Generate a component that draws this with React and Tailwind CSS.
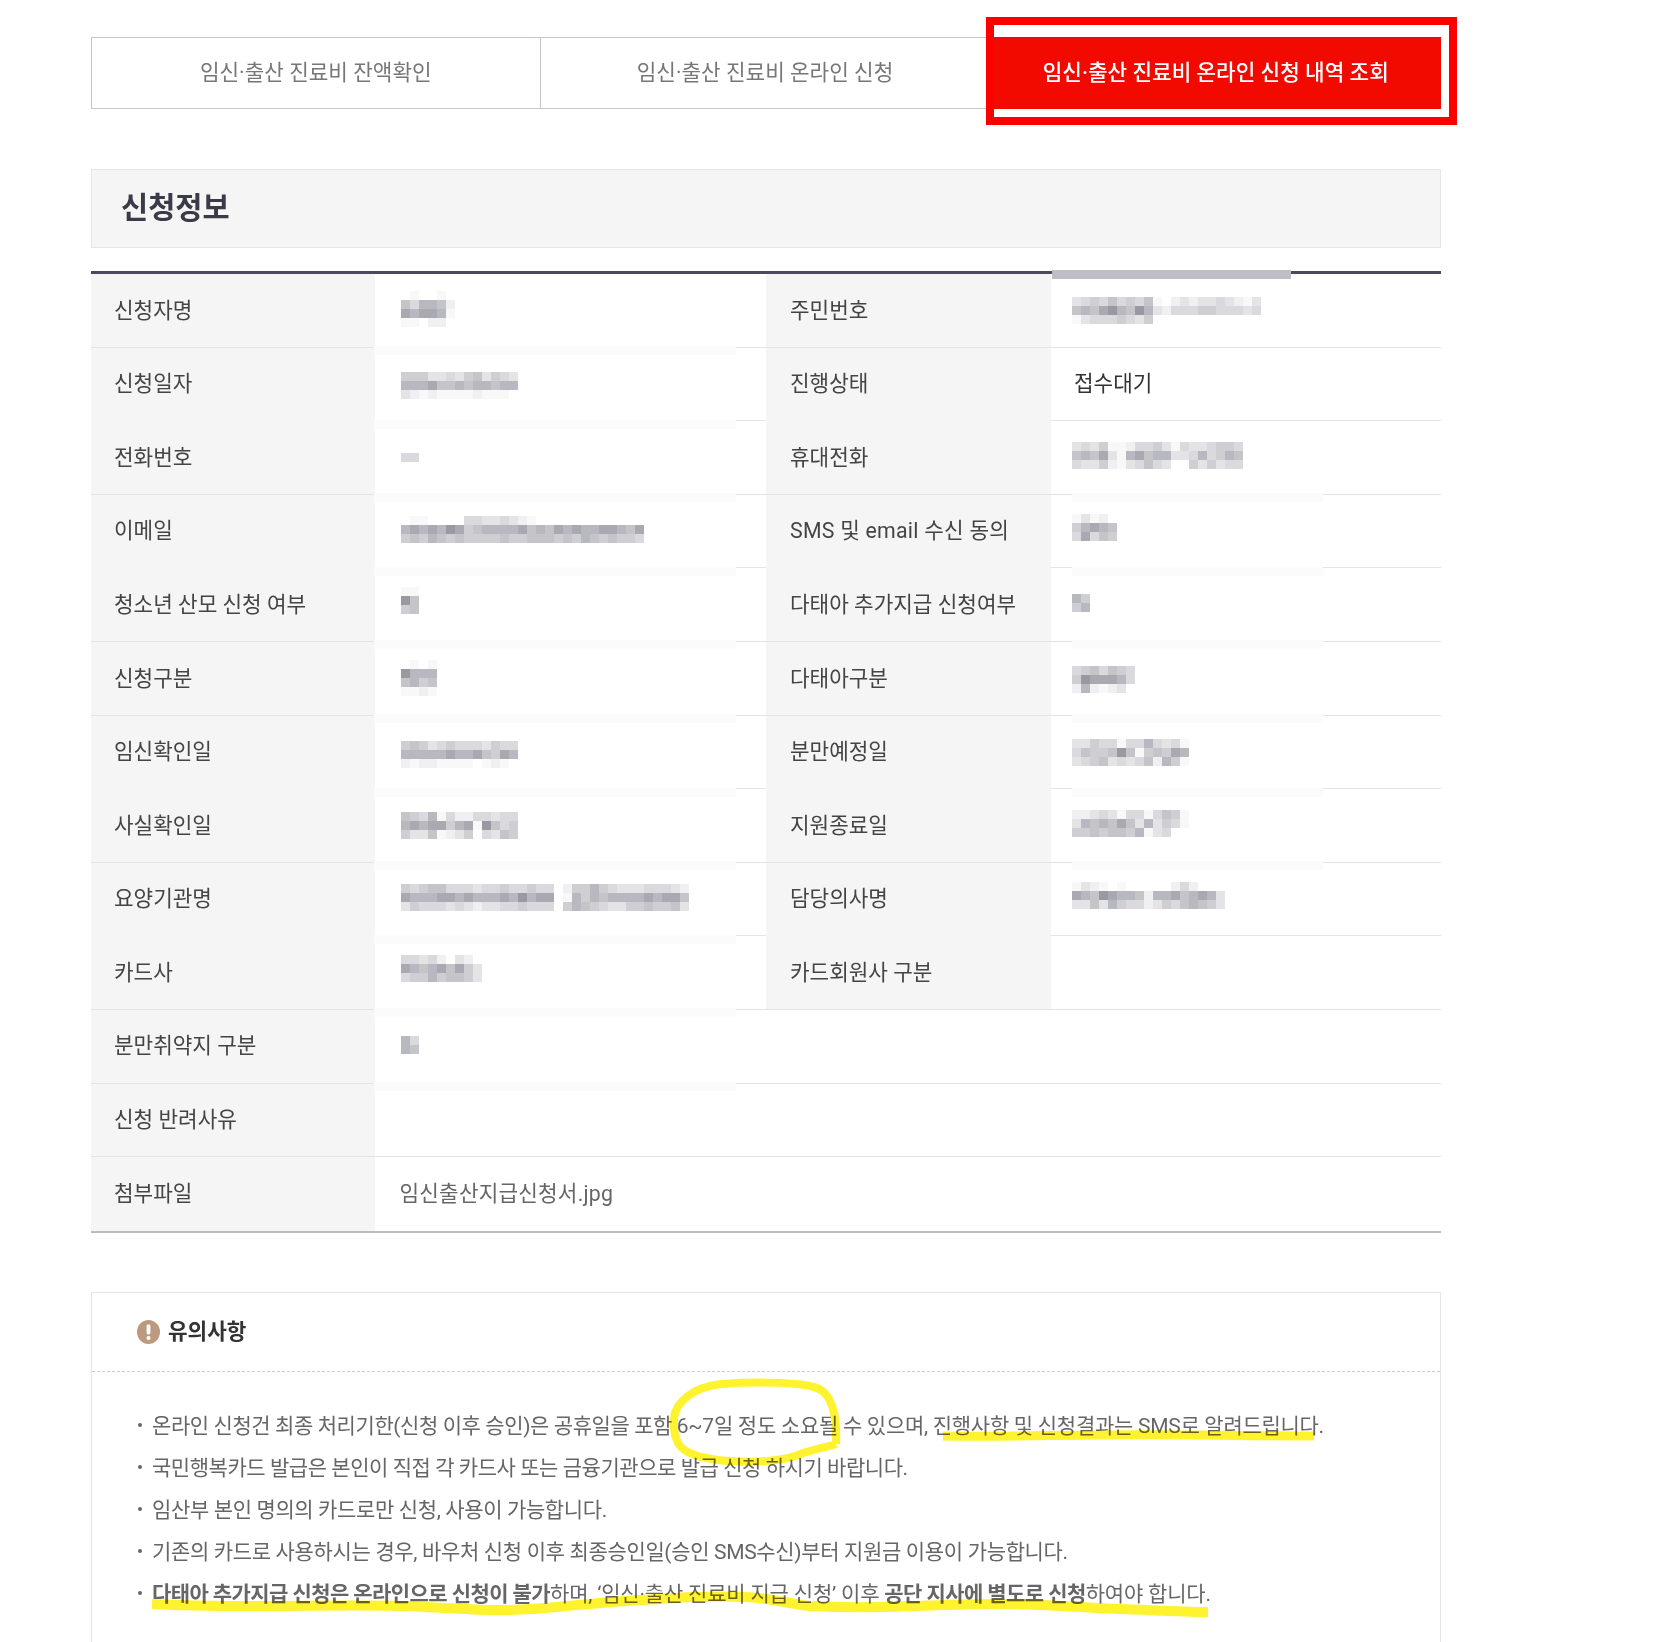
const SHADES = ["", "#f8f8f9", "#f0f0f2", "#e4e4e7", "#dadade", "#cfced3", "#c4c4c9", "#b8b8c0", "#aaa9b1", "#9a99a2"];

function Mosaic({ top, rows, cell = 9 }) {
  const width = Math.max(...rows.map((r) => r.length)) * cell;
  return (
    <svg width={width} height="73" className="ml-[1px] block overflow-visible" aria-hidden="true">
      {rows.map((row, ry) =>
        [...row].map((c, cx) =>
          c === "0" ? null : (
            <rect
              key={`${ry}-${cx}`}
              x={cx * cell}
              y={top + ry * cell}
              width={cell}
              height={cell}
              fill={SHADES[Number(c)]}
            />
          )
        )
      )}
    </svg>
  );
}

const rowsData = [
  { l: "신청자명", lv: { top: 17, rows: ["010010", "647762", "878871", "110220"] }, r: "주민번호", rv: { top: 23, rows: ["345464546102323343213", "676897697324445544434", "134445435000000000000"] } },
  { l: "신청일자", lv: { top: 24, rows: ["5553343563543", "7778667677677", "3212111121110"] }, r: "진행상태", rt: "접수대기" },
  { l: "전화번호", lv: { top: 32, rows: ["44"] }, r: "휴대전화", rv: { top: 21, rows: ["3435112445314334554", "6768317867733474576", "4335213464300535344"] } },
  { l: "이메일", lv: { top: 21, rows: ["011000044334321000000000000", "787879856777786768787788768", "565765655556556665657656554"] }, r: "SMS 및 email 수신 동의", rclass: "tracking-[0.25px]", rv: { top: 19, rows: ["13120", "57876", "48465"] } },
  { l: "청소년 산모 신청 여부", lv: { top: 19, rows: ["11", "96", "56"] }, r: "다태아 추가지급 신청여부", rv: { top: 26, rows: ["75", "57"] } },
  { l: "신청구분", lv: { top: 18, rows: ["0101", "9777", "6756", "1121"] }, r: "다태아구분", rv: { top: 24, rows: ["4564654", "5988874", "2721230"] } },
  { l: "임신확인일", lv: { top: 25, rows: ["5653454443544", "7777787786587", "2122111101210"] }, r: "분만예정일", rv: { top: 23, rows: ["3354414474341", "4655696156587", "3456343462751"] } },
  { l: "사실확인일", lv: { top: 23, rows: ["6547142244344", "7878857819645", "5336123504365"] }, r: "지원종료일", rv: { top: 21, rows: ["2234314414651", "3767686373541", "5565665713400"] } },
  { l: "요양기관명", lv: { top: 21, rows: ["54566444344544544025575433344432", "87778878777879788017576777787886", "35444343233445444057654335565563"] }, r: "담당의사명", rv: { top: 19, rows: ["13210100000242000", "87698776277867873", "33637544235467653"] } },
  { l: "카드사", lv: { top: 19, rows: ["443420320", "876786853", "455756653"] }, r: "카드회원사 구분", rt: "" },
  { l: "분만취약지 구분", lv: { top: 26, rows: ["74", "76"] }, wide: true },
  { l: "신청 반려사유", wide: true, empty: true },
  { l: "첨부파일", wide: true, file: "임신출산지급신청서.jpg" },
];

const leftStrip = new Set([0, 1, 2, 3, 4, 5, 6, 7, 8, 9, 10]);
const rightStrip = new Set([2, 3, 4, 5, 6, 7]);

function Strip({ className }) {
  return <div className={`absolute z-10 h-[9px] bg-[#fbfbfb] ${className}`} />;
}

function Row({ d, i }) {
  const last = i === rowsData.length - 1;
  const grid = d.wide ? "grid-cols-[283.5px_1fr]" : "grid-cols-[283.5px_391.5px_285px_390px]";
  return (
    <div className={`grid h-[73.6px] ${grid} ${last ? "" : "border-b border-[#e4e4e6]"}`}>
      <div className="flex items-center bg-[#f5f5f5] pl-[23px] text-[#444]">{d.l}</div>
      <div className="relative flex items-center pl-[25px]">
        {leftStrip.has(i) && <Strip className="-bottom-[8px] -left-[1px] w-[362px]" />}
        {d.lv && <Mosaic {...d.lv} />}
        {d.file && <span className="tracking-[0.2px] text-[#666]">{d.file}</span>}
      </div>
      {!d.wide && (
        <>
          <div className={`flex items-center bg-[#f5f5f5] pl-[24px] text-[#444] ${d.rclass || ""}`}>{d.r}</div>
          <div className="relative flex items-center pl-[20px]">
            {rightStrip.has(i) && <Strip className="-bottom-[8px] left-[21px] w-[251px]" />}
            {d.rv && <Mosaic {...d.rv} />}
            {d.rt && <span className="pl-[3px] text-[#333]">{d.rt}</span>}
          </div>
        </>
      )}
    </div>
  );
}

const notes = [
  {
    c: "tracking-[-0.28px]",
    t: (
      <>
        <span className="tracking-[-0.41px]">온라인 신청건 최종 처리기한(신청 이후 승인)은 공휴일을 포함 </span>6~7일 정도 소요될 수 있으며, 진행사항 및 신청결과는 SMS로 알려드립니다.
      </>
    ),
  },
  { c: "tracking-[-0.45px]", t: <>국민행복카드 발급은 본인이 직접 각 카드사 또는 금융기관으로 발급 신청 하시기 바랍니다.</> },
  { c: "tracking-[-0.37px]", t: <>임산부 본인 명의의 카드로만 신청, 사용이 가능합니다.</> },
  { c: "tracking-[-0.34px]", t: <>기존의 카드로 사용하시는 경우, 바우처 신청 이후 최종승인일(승인 SMS수신)부터 지원금 이용이 가능합니다.</> },
  {
    c: "tracking-[-0.19px]",
    t: (
      <>
        <b className="font-bold tracking-[-0.58px]">다태아 추가지급 신청은 온라인으로 신청이 불가</b>하며, ‘임신·출산 진료비 지급 신청’ 이후{" "}
        <b className="font-bold tracking-[-0.58px]">공단 지사에 별도로 신청</b>하여야 합니다.
      </>
    ),
  },
];

export default function App() {
  return (
    <div
      className="relative h-[1642px] w-[1676px] overflow-hidden bg-white pl-[91px] pt-[37px] text-[21.3px]"
      style={{ fontFamily: 'Roboto, "Noto Sans CJK KR", "Noto Sans", sans-serif' }}
    >
      <div className="w-[1350px]">
        <div className="flex h-[72px] text-[#777]">
          <div className="flex w-[449.5px] items-center justify-center border border-[#c6c6cc]">임신·출산 진료비 잔액확인</div>
          <div className="flex w-[450px] items-center justify-center border-y border-r border-[#c6c6cc]">임신·출산 진료비 온라인 신청</div>
          <div className="flex flex-1 items-center justify-center bg-[#f20a00] font-medium text-white">임신·출산 진료비 온라인 신청 내역 조회</div>
        </div>

        <div className="mt-[60px] flex h-[79px] items-center border border-[#e6e6e6] bg-[#f5f5f5] pl-[29px] text-[29.5px] font-bold text-[#3b3b48]">
          신청정보
        </div>

        <div className="mt-[23px] border-b-2 border-t-[3px] border-b-[#babcc0] border-t-[#4a4a5c]">
          {rowsData.map((d, i) => (
            <Row key={d.l} d={d} i={i} />
          ))}
        </div>

        <div className="mt-[59px] border-x border-t border-[#e6e6e6] pb-[40px]">
          <div className="flex h-[79px] items-center gap-[8px] border-b border-dashed border-[#cfcfcf] pl-[45px]">
            <svg width="23" height="24" viewBox="0 0 23 24" aria-hidden="true">
              <ellipse cx="11.5" cy="12" rx="11.5" ry="12" fill="#bc9a80" />
              <rect x="9.6" y="4.5" width="3.8" height="10" rx="1.4" fill="#fff" />
              <circle cx="11.5" cy="18" r="2" fill="#fff" />
            </svg>
            <span className="font-bold text-[#333]">유의사항</span>
          </div>
          <ul className="pt-[34px] text-[21px] text-[#666]">
            {notes.map((n, i) => (
              <li key={i} className={`flex h-[42px] items-center pl-[46px] ${n.c}`}>
                <span className="mr-[10px] mt-[-4px] h-[4px] w-[4px] shrink-0 rounded-full bg-[#666]" />
                <span className="whitespace-nowrap">{n.t}</span>
              </li>
            ))}
          </ul>
        </div>
      </div>

      <div className="absolute left-[986px] top-[17px] h-[108px] w-[471px] border-[8px] border-[#ff0000]" />
      <div className="absolute left-[1052px] top-[270px] h-[9px] w-[239px] bg-[#bebec6]" />

      <svg
        className="pointer-events-none absolute left-0 top-0 mix-blend-multiply"
        width="1676"
        height="1642"
        fill="none"
        stroke="#fff22e"
        strokeLinecap="butt"
        strokeLinejoin="round"
        aria-hidden="true"
      >
        <path
          strokeWidth="8"
          d="M836 1444 C837 1425 834 1408 829 1399 C824 1390 818 1387 804 1385 C788 1382 748 1382 721 1384 C706 1386 695 1390 688 1396 C680 1402 675 1408 674 1418 C673 1428 675 1442 682 1448 C690 1456 708 1459 728 1461 C753 1463 783 1461 798 1455 C813 1449 828 1447 836 1444"
        />
        <path strokeWidth="9" d="M943 1436 C1000 1437 1060 1435 1100 1435 C1170 1434 1250 1436 1314 1436" />
        <path
          strokeWidth="10"
          d="M152 1604 C190 1606 230 1606 250 1606 C310 1606 360 1605 400 1606 C440 1607 470 1610 500 1610 C540 1610 560 1606 590 1604 C620 1601 640 1600 660 1599 C690 1597 720 1596 745 1597 C770 1598 790 1604 810 1606 C850 1608 890 1607 915 1606 C945 1605 975 1604 1000 1604 C1050 1604 1090 1608 1120 1609 C1150 1610 1180 1612 1208 1612"
        />
      </svg>
    </div>
  );
}
